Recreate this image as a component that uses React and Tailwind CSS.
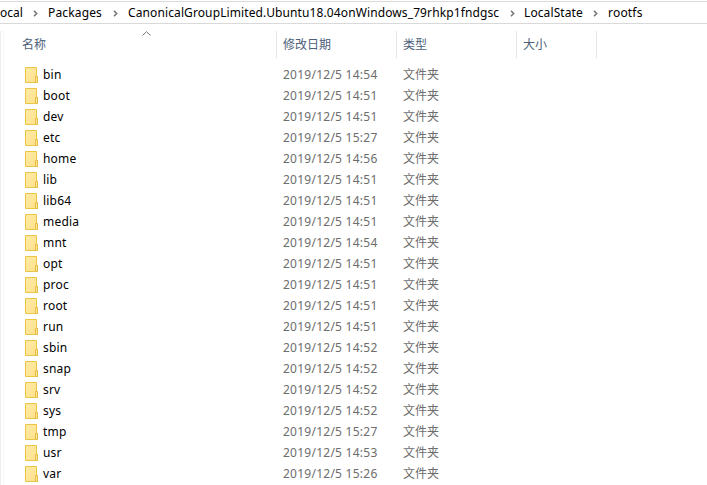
const folders = [
  ['bin', '14:54'], ['boot', '14:51'], ['dev', '14:51'], ['etc', '15:27'],
  ['home', '14:56'], ['lib', '14:51'], ['lib64', '14:51'], ['media', '14:51'],
  ['mnt', '14:54'], ['opt', '14:51'], ['proc', '14:51'], ['root', '14:51'],
  ['run', '14:51'], ['sbin', '14:52'], ['snap', '14:52'], ['srv', '14:52'],
  ['sys', '14:52'], ['tmp', '15:27'], ['usr', '14:53'], ['var', '15:26'],
];

function Chevron() {
  return (
    <svg className="mt-px h-[7px] w-[5px] shrink-0" viewBox="0 0 5 7" fill="none" stroke="#777" strokeWidth="1.5">
      <path d="M1 .9 3.700 3.500 1 6.100" />
    </svg>
  );
}

function Folder() {
  return (
    <svg className="h-4 w-[13px] shrink-0" viewBox="0 0 13 16">
      <defs>
        <linearGradient id="folder" x1="0" y1="0" x2="1" y2="1">
          <stop stopColor="#ffeba6" />
          <stop offset="1" stopColor="#ffe08a" />
        </linearGradient>
      </defs>
      <path d="M.5.5h11v9h1v6H.5z" fill="url(#folder)" stroke="#ebc544" />
      <path d="M10.5 15.500v-6h2v6z" fill="#ffe794" stroke="#e5bd45" />
    </svg>
  );
}

export default function App() {
  return (
    <div className="flex h-[485px] w-[707px] flex-col overflow-hidden bg-white font-['Noto_Sans','Noto_Sans_CJK_SC',sans-serif] text-[12px] text-black">
      <nav className="mt-px flex h-[23px] shrink-0 items-center border-y border-[#d9d9d9] whitespace-nowrap">
        <span className="w-[33px]">ocal</span>
        <Chevron />
        <span className="ml-[10px] w-[65px] tracking-[0.15px]">Packages</span>
        <Chevron />
        <span className="ml-[10px] w-[382px] tracking-[0.11px]">CanonicalGroupLimited.Ubuntu18.04onWindows_79rhkp1fndgsc</span>
        <Chevron />
        <span className="ml-[9px] w-[69px] tracking-[0.1px]">LocalState</span>
        <Chevron />
        <span className="ml-[10px] tracking-[0.2px]">rootfs</span>
      </nav>
      <main className="mt-[7px] flex h-[454px] shrink-0">
        <div className="w-1 shrink-0 border-r border-l border-r-[#f5f5f5] border-l-[#ededed]" />
        <div className="flex-1">
          <header className="flex h-[27px] text-[#4c607a]">
            <div className="flex w-[273px] border-r border-[#e5e5e5] pl-[18px] leading-[27px]">
              <span className="w-[120px]">名称</span>
              <svg className="h-[5px] w-[9px]" viewBox="0 0 9 5" fill="none" stroke="#777">
                <path d="M.5 4.500 4.500.7l4 3.800" />
              </svg>
            </div>
            <div className="w-[120px] border-r border-[#e5e5e5] pl-[6px] leading-[27px]">修改日期</div>
            <div className="w-[120px] border-r border-[#e5e5e5] pl-[6px] leading-[27px]">类型</div>
            <div className="w-20 border-r border-[#e5e5e5] pl-[6px] leading-[27px]">大小</div>
          </header>
          <div className="pt-[6px]">
            {folders.map(([name, time]) => (
              <div key={name} className="flex h-[21px] items-center pl-[21px] leading-[21px] text-[#6d6d6d]">
                <Folder />
                <span className="w-[244px] pl-[5px] tracking-[0.2px] text-black">{name}</span>
                <span className="w-[120px] pl-px tracking-[0.25px]">2019/12/5 {time}</span>
                <span className="pl-px">文件夹</span>
              </div>
            ))}
          </div>
        </div>
      </main>
    </div>
  );
}
